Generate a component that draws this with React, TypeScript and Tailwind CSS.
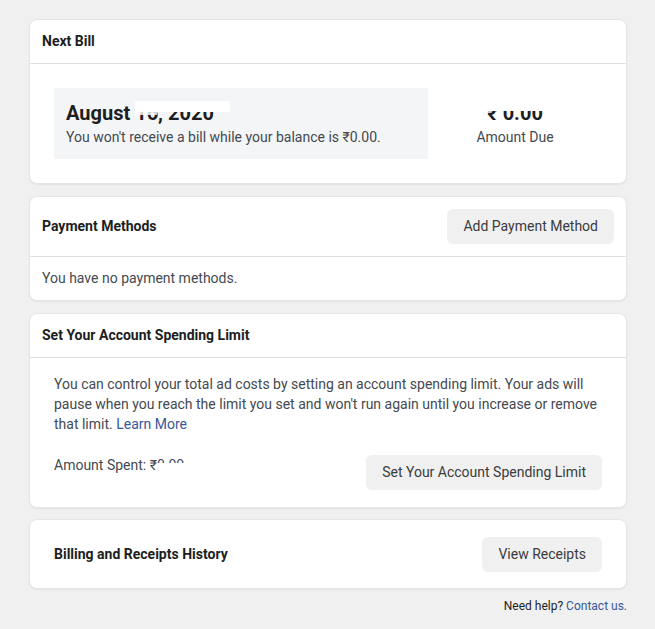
import type { ReactNode } from 'react'

function Card({ children, className = '' }: { children: ReactNode; className?: string }) {
  return (
    <div className={`bg-white rounded-lg border border-[#e6e6e6] shadow-[0_1px_2px_rgba(0,0,0,0.06)] overflow-hidden ${className}`}>
      {children}
    </div>
  )
}

function GreyBtn({ children }: { children: ReactNode }) {
  return (
    <button className="h-[35px] px-4 rounded-md bg-[#f0f0f0] text-[14px] text-[#3a3b3d] cursor-pointer">
      {children}
    </button>
  )
}

export default function App() {
  return (
    <div
      className="min-h-[629px] bg-[#f0f0f0] pt-[19px] pl-[29px] pr-[28px] text-[#444950]"
      style={{ fontFamily: 'Roboto, "Liberation Sans", sans-serif' }}
    >
      <div className="flex flex-col gap-3">
        <Card>
          <div className="h-[44px] flex items-center px-3 border-b border-[#dedede] text-[14px] font-bold text-[#1c1e21]">
            Next Bill
          </div>
          <div className="flex items-center px-6 py-6">
            <div className="w-[374px] h-[71px] bg-[#f4f5f7] px-3 flex flex-col justify-center">
              <div className="relative text-[20px] font-bold leading-6 text-[#1c1e21]">
                August 16, 2020
                <div className="absolute left-[69px] top-0 w-[95px] h-[11px] bg-white" />
                <div className="absolute left-[69px] top-[11px] w-[22px] h-[3px] bg-white/80" />
              </div>
              <div className="text-[14px] leading-5 mt-[2px]">You won't receive a bill while your balance is ₹0.00.</div>
            </div>
            <div className="flex-1 flex flex-col items-center justify-center">
              <div className="relative text-[20px] font-bold leading-6 text-[#1c1e21]">
                ₹ 0.00
                <div className="absolute -left-1 -right-1 top-0 h-[10px] bg-white" />
              </div>
              <div className="text-[14px] leading-5 mt-[2px]">Amount Due</div>
            </div>
          </div>
        </Card>

        <Card>
          <div className="h-[60px] flex items-center justify-between px-3 border-b border-[#dedede]">
            <span className="text-[14px] font-bold text-[#1c1e21]">Payment Methods</span>
            <GreyBtn>Add Payment Method</GreyBtn>
          </div>
          <div className="h-[43px] flex items-center px-3 text-[14px]">You have no payment methods.</div>
        </Card>

        <Card>
          <div className="h-[44px] flex items-center px-3 border-b border-[#dedede] text-[14px] font-bold text-[#1c1e21]">
            Set Your Account Spending Limit
          </div>
          <div className="px-6 pt-[16px] pb-[17px]">
            <p className="text-[14px] leading-5">
              You can control your total ad costs by setting an account spending limit. Your ads will pause when you reach the limit you set and won't run again until you increase or remove that limit.{' '}
              <a className="text-[#385898]">Learn More</a>
            </p>
            <div className="flex items-start justify-between mt-[21px]">
              <div className="relative text-[14px] leading-5">
                Amount Spent: ₹0.00
                <div className="absolute left-[103px] top-[8px] w-[40px] h-[12px] bg-white" />
              </div>
              <GreyBtn>Set Your Account Spending Limit</GreyBtn>
            </div>
          </div>
        </Card>

        <Card className="-mt-px">
          <div className="h-[68px] flex items-center justify-between px-6">
            <span className="text-[14px] font-bold text-[#1c1e21]">Billing and Receipts History</span>
            <GreyBtn>View Receipts</GreyBtn>
          </div>
        </Card>
      </div>
      <div className="text-right text-[12px] mt-[8px] text-[#1c1e21]">
        Need help? <a className="text-[#385898]">Contact us.</a>
      </div>
    </div>
  )
}
